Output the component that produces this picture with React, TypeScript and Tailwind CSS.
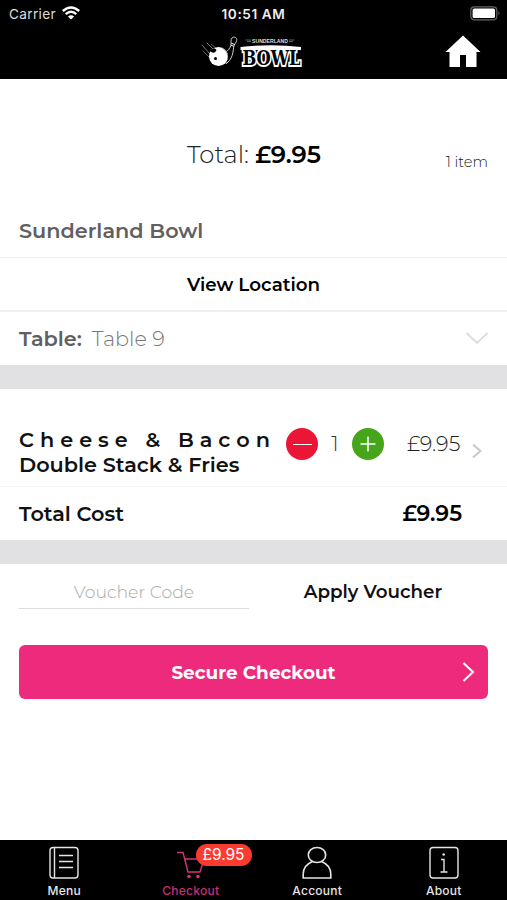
import React from 'react';

function BowlLogo() {
  return (
    <svg className="overflow-visible" width="104" height="40" viewBox="0 0 104 40" fill="none">
      <g stroke="#888" strokeLinecap="round">
        <path d="M0 9 L8 18" strokeWidth="0.9" />
        <path d="M5 7 L12 14" strokeWidth="0.9" />
        <path d="M1 15 L7 21" strokeWidth="0.7" />
        <path d="M9 8 L14 12.500" strokeWidth="0.7" />
      </g>
      <path
        d="M30 1.800 C32 0.200 35.500 1.500 34.700 4.500 C34.300 6.500 32.500 7.800 31.800 10.500 C31 14 31.500 18 28.500 23 C27 25.500 25 27 24 27.500 L23 17 C26 14.500 28 12.500 28.800 9.500 C29.400 7 28.300 4 30 1.800 Z"
        fill="#000"
        stroke="#ccc"
        strokeWidth="1"
      />
      <path d="M28.800 9 L31.800 10.300 M29.300 7.200 L32.800 8.600" stroke="#fff" strokeWidth="1" />
      <circle cx="16.500" cy="20.500" r="9.500" fill="#fff" />
      <path d="M8.500 15 C10 12 13.500 11.500 14.500 14 C14 16.500 10 18 8.500 15 Z" fill="#000" />
      <circle cx="13.500" cy="22.500" r="1.500" fill="#000" />
      <path d="M20 12 C24 14 26.500 18 25.500 24" stroke="#999" strokeWidth="0.8" />
      <path d="M43.500 4 H49 M45 5.500 H49 M87 4 H92.500 M87 5.500 H91" stroke="#666" strokeWidth="0.9" />
      <text x="50" y="6.500" fill="#ddd" fontSize="6" fontWeight="700" textLength="36" lengthAdjust="spacingAndGlyphs" fontFamily="Liberation Sans, sans-serif">
        SUNDERLAND
      </text>
      <path d="M38.500 11 Q70 7.500 99 11 V14 H38.500 Z" fill="#fff" />
      <text
        x="40.500"
        y="28.500"
        fill="#000"
        stroke="#fff"
        strokeWidth="4"
        paintOrder="stroke"
        fontSize="21"
        fontWeight="700"
        textLength="58"
        lengthAdjust="spacingAndGlyphs"
        fontFamily="DejaVu Serif, serif"
      >
        BOWL
      </text>
    </svg>
  );
}

function StatusBar() {
  return (
    <div className="grid h-7 grid-cols-3 items-center font-[Inter,sans-serif] text-[13.6px] text-[#ddd]">
      <div className="flex items-center gap-1.5 pl-[9px]">
        <span className="tracking-[0.35px]">Carrier</span>
        <svg className="-mt-px" width="18" height="14" viewBox="0 0 18 14" fill="none" stroke="#fff" strokeWidth="2.400">
          <path d="M0.800 5 Q9 -2.200 17.200 5" />
          <path d="M3.700 8.100 Q9 3.600 14.300 8.100" />
          <path d="M9 13.500 L5.900 10.400 Q9 8 12.100 10.400 Z" fill="#fff" stroke="none" />
        </svg>
      </div>
      <div className="text-center font-semibold tracking-[0.6px] text-[#eee]">10:51 AM</div>
      <div className="flex justify-end pr-1.5">
        <svg className="-mt-0.5" width="31" height="15" viewBox="0 0 31 15">
          <rect x="0.800" y="0.800" width="26" height="13" rx="3.500" fill="none" stroke="#666" strokeWidth="1.200" />
          <rect x="2.600" y="2.600" width="22.400" height="9.400" rx="1.500" fill="#fff" />
          <path d="M28.500 5 Q30.500 7.200 28.500 9.500 Z" fill="#666" />
        </svg>
      </div>
    </div>
  );
}

function Header() {
  return (
    <header className="h-[79px] bg-black">
      <StatusBar />
      <div className="grid h-[51px] grid-cols-3">
        <div />
        <div className="flex justify-center pt-2">
          <BowlLogo />
        </div>
        <div className="flex justify-end pt-[7px] pr-[26px]">
          <svg width="36" height="33" viewBox="0 0 36 33" fill="#fff">
            <path d="M18 0.500 L35.500 17 H31.500 V32 H21 V20 H15 V32 H4.500 V17 H0.500 Z" />
          </svg>
        </div>
      </div>
    </header>
  );
}

function MenuIcon() {
  return (
    <svg width="30" height="34" viewBox="0 0 30 34" fill="none" stroke="#e5e5e5" strokeWidth="1.400">
      <rect x="1" y="1.500" width="28" height="30.500" rx="3" />
      <path d="M5.500 1.500 V32 M10 9.500 H24 M10 15.500 H24 M10 21.500 H24" />
    </svg>
  );
}

function CartIcon() {
  return (
    <svg width="30" height="34" viewBox="0 0 30 34" fill="none" stroke="#d8317b" strokeWidth="1.400">
      <path d="M1 6.500 H7 L12 26 H24 L28 13 H8.700" />
      <circle cx="13" cy="30.500" r="1.800" fill="#d8317b" stroke="none" />
      <circle cx="22" cy="30.500" r="1.800" fill="#d8317b" stroke="none" />
    </svg>
  );
}

function AccountIcon() {
  return (
    <svg width="30" height="34" viewBox="0 0 30 34" fill="none" stroke="#e5e5e5" strokeWidth="1.600">
      <ellipse cx="15" cy="9" rx="8.700" ry="7.500" />
      <path d="M10.500 15.500 C4.500 18 1.200 22 1.200 28 V32 H28.800 V28 C28.800 22 25.500 18 19.500 15.500" />
    </svg>
  );
}

function AboutIcon() {
  return (
    <svg width="30" height="34" viewBox="0 0 30 34" fill="none" stroke="#e5e5e5" strokeWidth="1.400">
      <rect x="1" y="1.500" width="28" height="30.500" rx="3" />
      <path d="M12 13.500 H15 V26 M11.500 26 H18.500" />
      <circle cx="14.700" cy="8.500" r="1.300" fill="#e5e5e5" stroke="none" />
    </svg>
  );
}

const tabs = [
  { label: 'Menu', icon: <MenuIcon /> },
  { label: 'Checkout', icon: <CartIcon />, active: true, badge: '£9.95' },
  { label: 'Account', icon: <AccountIcon /> },
  { label: 'About', icon: <AboutIcon /> },
];

function TabBar() {
  return (
    <nav className="grid h-[60px] grid-cols-4 bg-black pl-px font-[Inter,sans-serif] text-[12px] tracking-[0.25px]">
      {tabs.map((tab) => (
        <div
          key={tab.label}
          className={`relative flex flex-col items-center pt-1.5 ${tab.active ? 'text-[#c72f73]' : 'text-[#e5e5e5]'}`}
        >
          {tab.icon}
          <span className="mt-0.5 font-medium leading-[18px]">{tab.label}</span>
          {tab.badge && (
            <span className="absolute top-1 left-[68px] flex h-[22px] w-[56px] items-center justify-center rounded-full bg-[#fb3b30] text-[15.5px] tracking-normal text-white">
              {tab.badge}
            </span>
          )}
        </div>
      ))}
    </nav>
  );
}

export default function App() {
  return (
    <div className="flex h-[900px] w-[507px] flex-col overflow-hidden bg-white font-[Montserrat,Inter,sans-serif] text-[#111]">
      <Header />

      <main className="flex-1">
        <section className="grid h-[125px] grid-cols-[1fr_auto_1fr] items-center pt-[26px]">
          <div />
          <div className="pl-px text-[24.3px] font-light text-[#222]">
            Total: <span className="font-semibold text-black">£9.95</span>
          </div>
          <div className="pt-4 pr-[19px] text-right text-[14.6px] font-light text-[#222]">1 item</div>
        </section>

        <div className="flex h-[54px] items-center border-b border-[#f1f1f1] px-[19px] text-[20.8px] font-semibold text-[#606060]">
          Sunderland Bowl
        </div>
        <div className="flex h-[54px] items-center justify-center border-b-2 border-[#f0f0f0] pt-0.5 text-[18.3px] font-semibold text-black">
          View Location
        </div>
        <div className="flex h-[53px] items-center px-[19px] text-[20.8px]">
          <span className="pt-px font-semibold text-[#606060]">Table:</span>
          <span className="ml-2.5 pt-px font-light text-[#777]">Table 9</span>
          <svg className="ml-auto" width="22" height="13" viewBox="0 0 22 13" fill="none" stroke="#ddd" strokeWidth="1.800">
            <path d="M0.500 1 L11 11 L21.500 1" />
          </svg>
        </div>

        <div className="h-6 bg-[#e1e1e3]" />

        <div className="flex h-[98px] items-start border-b border-[#f5f5f5] pt-[38px] pl-[19px]">
          <div className="w-[267px] whitespace-nowrap text-[20.8px] font-semibold leading-[25px]">
            <div className="tracking-[6px]">Cheese &amp; Bacon</div>
            <div>Double Stack &amp; Fries</div>
          </div>
          <button className="mt-px flex size-8 items-center justify-center rounded-full bg-[#eb1535]">
            <span className="h-px w-[19px] bg-white" />
          </button>
          <span className="w-[34px] pt-px text-center text-[20.8px] font-light leading-8 text-[#333]">1</span>
          <button className="mt-px flex size-8 items-center justify-center rounded-full bg-[#46a51b]">
            <svg width="16" height="16" viewBox="0 0 16 16" stroke="#fff" strokeWidth="1.500">
              <path d="M8 0.500 V15.500 M0.500 8 H15.500" />
            </svg>
          </button>
          <span className="ml-[23px] w-[54px] pt-px text-[20.8px] font-light leading-8 text-[#222]">£9.95</span>
          <svg className="mt-4 ml-[11px]" width="10" height="16" viewBox="0 0 10 16" fill="none" stroke="#c8c8c8" strokeWidth="2">
            <path d="M1 1.500 L8.500 8 L1 14.500" />
          </svg>
        </div>
        <div className="flex h-[53px] items-center justify-between pr-[45px] pl-[19px] text-[20.8px] font-semibold">
          <span>Total Cost</span>
          <span className="text-[22px] text-black">£9.95</span>
        </div>

        <div className="h-6 bg-[#e1e1e3]" />

        <div className="flex h-[45px] px-[19px]">
          <div className="flex w-[230px] items-center justify-center border-b border-[#ddd] pt-[11px] text-[17.3px] font-light text-[#aaa]">
            Voucher Code
          </div>
          <div className="flex flex-1 items-center justify-center pt-2.5 pl-[9px] text-[18.3px] font-semibold">
            Apply Voucher
          </div>
        </div>

        <div className="mt-9 px-[19px]">
          <button className="flex h-[54px] w-full items-center rounded-md bg-[#ee2a7c] pr-[13px] pl-[26px] text-[18.4px] font-bold text-white">
            <span className="flex-1 pt-0.5 text-center">Secure Checkout</span>
            <svg width="13" height="20" viewBox="0 0 13 20" fill="none" stroke="#fff" strokeWidth="2">
              <path d="M1.500 1 L11 10 L1.500 19" />
            </svg>
          </button>
        </div>
      </main>

      <TabBar />
    </div>
  );
}
